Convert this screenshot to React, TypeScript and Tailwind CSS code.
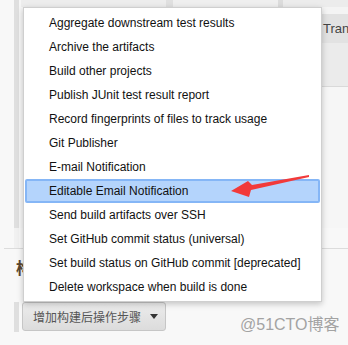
import { FC } from 'react';

const items = [
  'Aggregate downstream test results',
  'Archive the artifacts',
  'Build other projects',
  'Publish JUnit test result report',
  'Record fingerprints of files to track usage',
  'Git Publisher',
  'E-mail Notification',
  'Editable Email Notification',
  'Send build artifacts over SSH',
  'Set GitHub commit status (universal)',
  'Set build status on GitHub commit [deprecated]',
  'Delete workspace when build is done',
];

const App: FC = () => {
  return (
    <div
      className="relative w-[348px] h-[345px] overflow-hidden bg-[#f8f8f8]"
      style={{ fontFamily: '"Liberation Sans", Arial, "Noto Sans CJK SC", sans-serif' }}
    >
      {/* background page */}
      <div className="flex h-[228px]">
        <div className="w-[14px] shrink-0" />
        <div className="w-[5px] shrink-0 bg-[#dfdfdf]" />
        <div className="flex-1 flex flex-col pl-[2px] bg-[#f6f6f6]">
          <div className="flex h-[7px]">
            <div className="w-[145px] bg-[#ededed]" />
            <div className="w-[7px] bg-[#e0e0e0]" />
            <div className="w-[105px] bg-[#efefef]" />
            <div className="w-[5px] bg-[#dcdcdc]" />
            <div className="flex-1 bg-[#ececec]" />
          </div>
          <div className="flex flex-1">
            <div className="flex-1" />
            <div className="w-[26px] flex flex-col">
              <div className="h-[7px] bg-[#f4f4f4]" />
              <div className="h-[29px] bg-[#e2e2e2] flex items-center pl-[1px] text-[13px] text-[#444] whitespace-nowrap overflow-hidden">
                Tran
              </div>
              <div className="h-[44px] bg-[#ebebeb] border-b border-[#d9d9d9]" />
              <div className="flex-1 bg-[#f6f6f6]" />
            </div>
          </div>
        </div>
      </div>
      <div className="h-[20px] flex">
        <div className="w-[14px]" />
        <div className="w-[5px] bg-[#f1f1f1]" />
      </div>
      <div className="ml-[4px] border-t border-[#dcdcdc] h-[54px] pl-[12px] pt-[6px]">
        <div className="text-[16px] font-bold text-[#5a4630]" style={{ fontFamily: '"Noto Sans CJK SC", sans-serif' }}>
          构建后操作
        </div>
      </div>
      <div className="flex h-[30px]">
        <div className="w-[14px] shrink-0" />
        <div className="w-[5px] shrink-0 bg-[#dfdfdf]" />
        <button
          className="ml-[3px] w-[144px] h-[29px] flex items-center pl-[10px] gap-[9px] rounded-[3px] border border-[#c6c6c6] bg-gradient-to-b from-[#ececec] to-[#dcdcdc] text-[12px] text-[#555]"
          style={{ fontFamily: '"Noto Sans CJK SC", sans-serif' }}
        >
          <span>增加构建后操作步骤</span>
          <svg width="8" height="5" viewBox="0 0 8 5">
            <path d="M0 0 L8 0 L4 5 Z" fill="#333" />
          </svg>
        </button>
      </div>

      {/* dropdown menu */}
      <div className="absolute left-[23px] top-[7px] w-[299px] h-[295px] bg-white border border-[#cfcfcf] shadow-[0_2px_6px_rgba(0,0,0,0.22)] pt-[3px] px-[1px]">
        {items.map((item, i) => (
          <div
            key={item}
            className={
              i === 7
                ? 'h-[24px] flex items-center pl-[22px] text-[12px] text-[#111] whitespace-nowrap bg-[#b4d4fc] border-2 border-[#85b6f6] rounded-[2px]'
                : 'h-[24px] flex items-center pl-[24px] text-[12px] text-[#111] whitespace-nowrap'
            }
          >
            {item}
          </div>
        ))}
      </div>

      {/* red annotation arrow */}
      <svg className="absolute left-0 top-0" width="348" height="345" viewBox="0 0 348 345">
        <polygon points="309,175 252,185 248,181 231,191 249,197 251,190 309,177" fill="#f23a3a" />
      </svg>

      {/* watermark */}
      <div
        className="absolute left-[240px] top-[313px] text-[16px] text-[#a3a3a3] whitespace-nowrap"
        style={{ fontFamily: '"Liberation Sans", "Noto Sans CJK SC", sans-serif' }}
      >
        @51CTO博客
      </div>
    </div>
  );
};

export default App;
